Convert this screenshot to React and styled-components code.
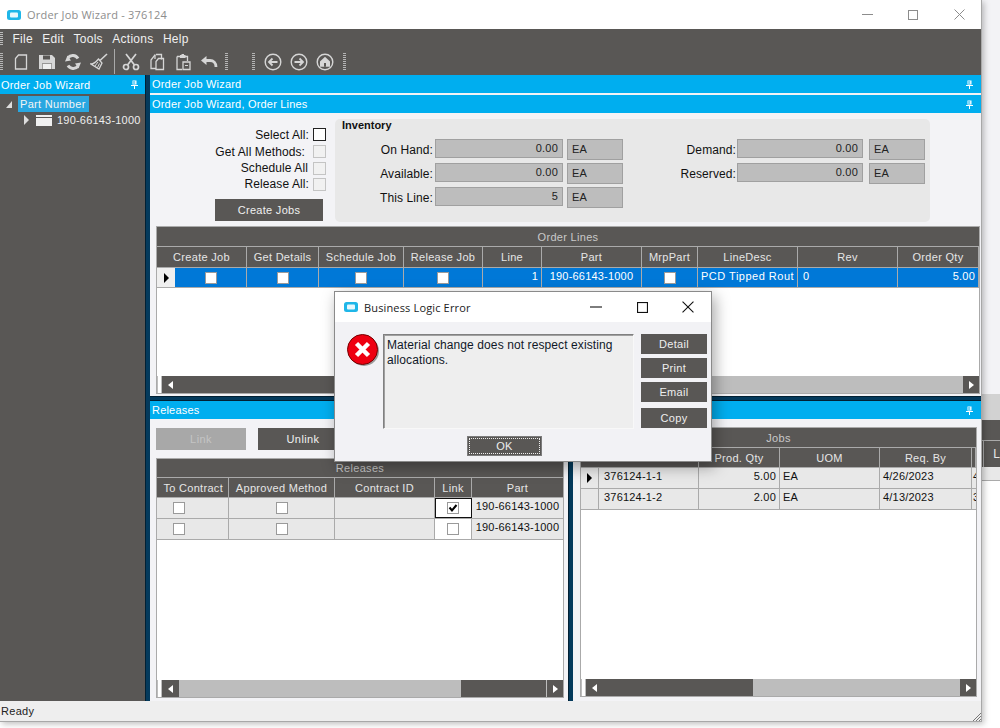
import React from "react";
import styled, { createGlobalStyle } from "styled-components";

const DARK = "#595755";
const CYAN = "#00aeef";
const LINE = "#aaaaaa";
const ICON = "#d6d6d6";

const GlobalStyle = createGlobalStyle`
  html, body {
    margin: 0;
    padding: 0;
    background: #fff;
  }
  * {
    box-sizing: border-box;
  }
`;

const Desktop = styled.div`
  position: relative;
  width: 1000px;
  height: 728px;
  overflow: hidden;
  background: #fff;
  font-family: "Liberation Sans", Arial, sans-serif;
  font-size: 11px;
  letter-spacing: 0.2px;
  color: #111;
`;

/* the other window, peeking out on the right */
const BackWindow = styled.div`
  position: absolute;
  left: 982px;
  top: 0;
  width: 18px;
  height: 728px;
  display: flex;
  flex-direction: column;
`;

const BackTop = styled.div`
  height: 394px;
  background: #f3f3f6;
`;

const BackBand = styled.div`
  height: 26px;
  background: #d2d2d2;
`;

const BackGroup = styled.div`
  height: 20px;
  background: ${DARK};
`;

const BackHeader = styled.div`
  height: 27px;
  background: ${DARK};
  border-top: 1px solid ${LINE};
  color: #e8e8e8;
  padding: 6px 0 0 4px;
  font-size: 12px;
  display: flex;
`;

const BackCut = styled.div`
  width: 4px;
  margin-left: -4px;
  border-right: 1px solid ${LINE};
  margin-top: -6px;
`;

const BackLetter = styled.span`
  margin-left: 9px;
`;

const BackRow = styled.div`
  height: 14px;
  background: #e8e8e8;
  border-bottom: 1px solid ${LINE};
  display: flex;
`;

const MainWindow = styled.div`
  position: absolute;
  left: 0;
  top: 0;
  width: 982px;
  height: 722px;
  display: flex;
  flex-direction: column;
  background: #fff;
  border-right: 1px solid #a8a8a8;
  border-bottom: 1px solid #a8a8a8;
  box-shadow: 2px 2px 6px rgba(0, 0, 0, 0.25);
`;

const TitleBar = styled.div`
  height: 29px;
  flex: none;
  display: flex;
  align-items: center;
  padding-left: 7px;
  background: #fff;
  font-family: "Open Sans", "Liberation Sans", sans-serif;
  font-size: 11px;
  letter-spacing: 0.2px;
  color: #8d8d8d;
`;

const TitleText = styled.span`
  margin-left: 6px;
`;

const WindowButtons = styled.div`
  margin-left: auto;
  margin-right: ${(p) => p.$shift || 0}px;
  display: flex;
  align-items: center;
`;

const WindowButton = styled.div`
  width: 46px;
  height: 29px;
  display: flex;
  align-items: center;
  justify-content: center;
`;

const MenuBar = styled.div`
  height: 19px;
  flex: none;
  display: flex;
  align-items: center;
  gap: 9.5px;
  background: ${DARK};
  color: #f0f0f0;
  font-size: 12px;
  letter-spacing: 0.25px;
`;

const MenuGrip = styled.div`
  width: 3px;
  height: 13px;
  background: repeating-linear-gradient(to bottom, #bbb 0 1px, transparent 1px 2px);
`;

const ToolBar = styled.div`
  height: 27px;
  flex: none;
  display: flex;
  align-items: center;
  background: ${DARK};
`;

const ToolGrip = styled.div`
  width: 3px;
  height: 18px;
  flex: none;
  margin-left: ${(p) => p.$left || 0}px;
  margin-right: ${(p) => p.$right || 0}px;
  background: repeating-linear-gradient(to bottom, #b5b5b5 0 1px, transparent 1px 2px);
`;

const ToolSep = styled.div`
  width: 1px;
  height: 25px;
  flex: none;
  margin: 0 3px 0 2px;
  background: #a9a9a9;
`;

const ToolIcon = styled.div`
  width: 26px;
  height: 20px;
  flex: none;
  display: flex;
  align-items: center;
  justify-content: center;
`;

const Workspace = styled.div`
  flex: 1;
  min-height: 0;
  display: flex;
`;

const LeftPanel = styled.div`
  width: 145px;
  flex: none;
  background: ${DARK};
  display: flex;
  flex-direction: column;
`;

const Caption = styled.div`
  height: ${(p) => p.$h || 18}px;
  flex: none;
  display: flex;
  align-items: center;
  justify-content: space-between;
  padding: 0 ${(p) => p.$pinRight || 8}px 0 ${(p) => p.$textLeft || 2}px;
  margin-bottom: ${(p) => p.$gap || 0}px;
  background: ${CYAN};
  color: #fff;
  white-space: nowrap;
`;

const Tree = styled.div`
  padding-top: 2px;
  color: #eee;
`;

const TreeRow = styled.div`
  height: ${(p) => p.$h}px;
  display: flex;
  align-items: center;
  padding-left: ${(p) => p.$indent}px;
`;

const TreeSelected = styled.span`
  height: 16px;
  padding: 0 3px 0 2px;
  margin-left: 6px;
  line-height: 16px;
  background: #29a7e1;
  color: #f4f4f4;
  letter-spacing: 0.3px;
`;

const TreeLabel = styled.span`
  margin-left: 5px;
`;

const FolderIcon = styled.div`
  width: 16px;
  height: 11px;
  margin-left: 7px;
  background: #f0f0f0;
  border-top: 2px solid #f0f0f0;
  box-shadow: inset 0 1px 0 ${DARK};
`;

const Splitter = styled.div`
  width: 5px;
  flex: none;
  background: #043a5c;
  border-left: 1px solid #012033;
`;

const RightPanel = styled.div`
  flex: 1;
  min-width: 0;
  display: flex;
  flex-direction: column;
  background: #f2f2f5;
`;

const WizardPane = styled.div`
  height: 281px;
  flex: none;
  padding: 6px 1px 0 6px;
  background: #f3f3f6;
`;

const WizardTop = styled.div`
  display: flex;
  height: 107px;
`;

const CheckColumn = styled.div`
  width: 170px;
  flex: none;
  display: flex;
  flex-direction: column;
  align-items: flex-end;
  padding-top: 7px;
`;

const CheckRow = styled.div`
  height: ${(p) => p.$h}px;
  display: flex;
  align-items: center;
  justify-content: flex-end;
  gap: ${(p) => p.$gap}px;
  font-size: 12px;
  letter-spacing: 0.1px;
`;

const Check = styled.span`
  width: ${(p) => p.$size || 12}px;
  height: ${(p) => p.$size || 12}px;
  flex: none;
  display: inline-flex;
  align-items: center;
  justify-content: center;
  background: ${(p) => (p.$off ? "#f1f1f1" : "#fff")};
  border: 1px solid ${(p) => (p.$off ? "#c4c4c4" : p.$strong ? "#222" : "#9a9a9a")};
`;

const CreateJobsButton = styled.div`
  width: 108px;
  height: 22px;
  margin: 7px 3px 0 0;
  display: flex;
  align-items: center;
  justify-content: center;
  background: ${DARK};
  color: #f0f0f0;
  letter-spacing: 0.3px;
`;

const InventoryBox = styled.div`
  width: 595px;
  height: 103px;
  flex: none;
  margin-left: 9px;
  padding: 1px 0 0 7px;
  border-radius: 5px;
  background: #e8e8e8;
`;

const InventoryTitle = styled.div`
  height: 17px;
  font-weight: bold;
  line-height: 11px;
  letter-spacing: 0;
`;

const InventoryColumns = styled.div`
  display: flex;
  margin-left: -7px;
  margin-top: 2px;
`;

const InventoryColumn = styled.div`
  display: flex;
  flex-direction: column;
  gap: 4px;
`;

const InvRow = styled.div`
  height: 20px;
  display: flex;
  gap: ${(p) => p.$gap}px;
`;

const InvLabel = styled.div`
  width: ${(p) => p.$w}px;
  height: 20px;
  line-height: 22px;
  text-align: right;
  font-size: 12px;
  letter-spacing: 0.1px;
  white-space: nowrap;
`;

const InvField = styled.div`
  width: ${(p) => p.$w}px;
  height: ${(p) => p.$h}px;
  line-height: ${(p) => p.$h - 2}px;
  padding: 0 ${(p) => (p.$right ? 4 : 0)}px 0 ${(p) => (p.$right ? 0 : 4)}px;
  margin-left: ${(p) => p.$ml || 0}px;
  text-align: ${(p) => (p.$right ? "right" : "left")};
  background: #bdbdbd;
  border: 1px solid #a0a0a0;
  color: #222;
`;

const GridBox = styled.div`
  display: flex;
  flex-direction: column;
  height: ${(p) => (p.$h ? `${p.$h}px` : "auto")};
  flex: ${(p) => (p.$h ? "none" : 1)};
  min-height: 0;
  background: #fff;
  border: 1px solid ${LINE};
  overflow: hidden;
`;

const GroupHeader = styled.div`
  height: ${(p) => p.$h}px;
  flex: none;
  display: flex;
  align-items: center;
  justify-content: center;
  background: ${DARK};
  border-bottom: 1px solid ${LINE};
  color: #c9c9c9;
  letter-spacing: 0.3px;
`;

const GridRow = styled.div`
  display: grid;
  flex: none;
  height: ${(p) => p.$h}px;
  grid-template-columns: ${(p) => p.$cols};
  border-bottom: 1px solid ${LINE};
  background: ${(p) => p.$bg || "#e8e8e8"};
  color: ${(p) => p.$color || "#111"};
`;

const HeadCell = styled.div`
  display: flex;
  align-items: center;
  justify-content: ${(p) => p.$align || "center"};
  padding-right: ${(p) => (p.$align ? 5 : 0)}px;
  overflow: hidden;
  white-space: nowrap;
  border-right: 1px solid ${LINE};
  background: ${DARK};
  color: #e6e6e6;
  letter-spacing: 0.3px;
`;

const Cell = styled.div`
  display: flex;
  align-items: center;
  justify-content: ${(p) =>
    p.$center ? "center" : p.$right ? "flex-end" : "flex-start"};
  padding: 0 3px 4px 3px;
  overflow: hidden;
  white-space: nowrap;
  border-right: 1px solid ${LINE};
  background: ${(p) => p.$bg || "transparent"};
  letter-spacing: ${(p) => p.$track || 0.2}px;
`;

const CheckCell = styled.div`
  display: flex;
  align-items: center;
  justify-content: center;
  padding-right: ${(p) => p.$pr || 0}px;
  border-right: 1px solid ${LINE};
  background: ${(p) => p.$bg || "transparent"};
  outline: ${(p) => (p.$focus ? "1px solid #111" : "none")};
  outline-offset: -1px;
`;

const Selector = styled.div`
  width: 18px;
  flex: none;
  display: flex;
  align-items: center;
  justify-content: center;
  background: ${(p) => p.$bg || "transparent"};
  border-right: ${(p) => (p.$line ? `1px solid ${LINE}` : "none")};
`;

const SelectorSplit = styled.div`
  display: flex;
  border-right: 1px solid ${LINE};
  min-width: 0;
`;

const SelectorBody = styled.div`
  flex: 1;
  display: flex;
  align-items: ${(p) => (p.$text ? "flex-start" : "center")};
  justify-content: ${(p) => (p.$text ? "flex-start" : "center")};
  padding-left: ${(p) => (p.$text ? 5 : 1)}px;
  padding-top: ${(p) => (p.$text ? 2 : 0)}px;
`;

const Triangle = styled.span`
  width: 0;
  height: 0;
  border-left: 5px solid ${(p) => p.$color || "#000"};
  border-top: 5px solid transparent;
  border-bottom: 5px solid transparent;
`;

const SmallArrow = styled.span`
  width: 0;
  height: 0;
  ${(p) => (p.$left ? "border-right" : "border-left")}: 5px solid #fff;
  border-top: 4px solid transparent;
  border-bottom: 4px solid transparent;
`;

const GridBlank = styled.div`
  flex: 1;
  min-height: 0;
  background: #fff;
`;

const ScrollBar = styled.div`
  height: 17px;
  flex: none;
  display: flex;
  background: #bdbdbd;
`;

const ScrollEdge = styled.div`
  width: 5px;
  flex: none;
  background: #fff;
  border-left: 1px solid #bdbdbd;
  border-right: 1px solid #bdbdbd;
`;

const ScrollTrack = styled.div`
  flex: 1;
  min-width: 0;
  display: flex;
`;

const ScrollThumb = styled.div`
  width: ${(p) => p.$w}px;
  margin-left: ${(p) => p.$start}px;
  display: flex;
  align-items: center;
  padding-left: ${(p) => (p.$start === 0 ? 6 : 0)}px;
  background: ${DARK};
`;

const ScrollButton = styled.div`
  width: 17px;
  flex: none;
  display: flex;
  align-items: center;
  justify-content: center;
  background: ${DARK};
  border-left: ${(p) => (p.$first ? "none" : "1px solid #bdbdbd")};
`;

const NavyBar = styled.div`
  height: 7px;
  flex: none;
  background: linear-gradient(to bottom, #f3f3f6 0 2px, #012033 2px 3px, #043a5c 3px 6px, #012033 6px 7px);
`;

const BottomPanes = styled.div`
  flex: 1;
  min-height: 0;
  display: flex;
`;

const ReleasesPane = styled.div`
  width: 418px;
  flex: none;
  display: flex;
  flex-direction: column;
`;

const JobsPane = styled.div`
  flex: 1;
  min-width: 0;
  display: flex;
  flex-direction: column;
`;

const PaneBody = styled.div`
  flex: 1;
  min-height: 0;
  display: flex;
  flex-direction: column;
  padding: ${(p) => p.$pad};
  background: #f3f3f6;
`;

const PaneButtons = styled.div`
  display: flex;
  gap: 12px;
  height: 22px;
  flex: none;
  margin-bottom: 8px;
`;

const PaneButton = styled.div`
  width: 90px;
  height: 22px;
  display: flex;
  align-items: center;
  justify-content: center;
  background: ${(p) => (p.$disabled ? "#a8a8a8" : DARK)};
  color: ${(p) => (p.$disabled ? "#c4c4c4" : "#f0f0f0")};
  letter-spacing: 0.4px;
`;

const StatusBar = styled.div`
  position: relative;
  height: 20px;
  flex: none;
  display: flex;
  align-items: center;
  padding-left: 1px;
  background: #eeeeee;
  color: #222;
  letter-spacing: 0.3px;
`;

const ResizeGrip = styled.svg`
  position: absolute;
  right: 0;
  bottom: 0;
`;

const Dialog = styled.div`
  position: absolute;
  left: 334px;
  top: 291px;
  width: 378px;
  height: 171px;
  display: flex;
  flex-direction: column;
  background: #f2f2f5;
  border: 1px solid #8a8a8a;
  box-shadow: 3px 5px 14px rgba(0, 0, 0, 0.35);
`;

const DialogTitle = styled.div`
  height: 30px;
  flex: none;
  display: flex;
  align-items: center;
  padding-left: 9px;
  background: #fff;
  font-family: "Open Sans", "Liberation Sans", sans-serif;
  font-size: 11px;
  letter-spacing: 0.15px;
  color: #222;
`;

const DialogTitleText = styled.span`
  margin-left: 6px;
`;

const DialogBody = styled.div`
  flex: 1;
  display: flex;
  padding: 12px 4px 0 12px;
`;

const ErrorIcon = styled.div`
  width: 36px;
  flex: none;
`;

const MessageBox = styled.div`
  width: 251px;
  height: 95px;
  flex: none;
  padding: 3px 3px;
  font-size: 12px;
  line-height: 15px;
  letter-spacing: 0.1px;
  background: #eeeeee;
  border: 1px solid;
  border-color: #808080 #f8f8f8 #f8f8f8 #808080;
  box-shadow: inset 1px 1px 0 #a0a0a0;
  color: #101828;
`;

const DialogButtons = styled.div`
  margin-left: 7px;
  width: 66px;
  display: flex;
  flex-direction: column;
`;

const DialogButton = styled.div`
  height: 20px;
  margin-bottom: ${(p) => p.$gap}px;
  display: flex;
  align-items: center;
  justify-content: center;
  background: ${DARK};
  color: #eee;
  letter-spacing: 0.3px;
`;

const DialogFooter = styled.div`
  height: 33px;
  flex: none;
  padding: 7px 0 0 132px;
`;

const OkButton = styled.div`
  width: 75px;
  height: 20px;
  display: flex;
  align-items: center;
  justify-content: center;
  background: ${DARK};
  border: 1px solid #7c7c7c;
  outline: 1px dotted #eee;
  outline-offset: -3px;
  color: #eee;
`;

const AppIcon = () => (
  <svg width="14" height="10" viewBox="0 0 14 10">
    <rect width="14" height="10" rx="2.5" fill="#1fb6e8" />
    <rect x="3" y="2.5" width="8" height="5" rx="1" fill="#e8f8fd" />
  </svg>
);

const Pin = () => (
  <svg width="7" height="9" viewBox="0 0 7 9">
    <path d="M1.5 0.5h4v4h-4zM0 5h7v1H0zM3 6h1v3H3z" fill="#fff" />
    <path d="M3.6 1h1v3h-1z" fill="#cfeffc" />
    <path d="M2.5 1h1v3h-1z" fill={CYAN} />
  </svg>
);

const Tool = ({ children }) => (
  <ToolIcon>
    <svg width="18" height="18" viewBox="0 0 18 18" fill="none" stroke={ICON} strokeWidth="1.3">
      {children}
    </svg>
  </ToolIcon>
);

const Toolbar = () => (
  <ToolBar>
    <ToolGrip $right={5} />
    <Tool>
      <path d="M6.5 2h8v14H3.5V5.5z" />
    </Tool>
    <Tool>
      <path d="M1 2h13l3 3v11H1z" fill={ICON} stroke="none" />
      <path d="M5 2.5h7v4H5zM4 10.5h10V16H4z" fill={DARK} stroke="none" />
      <path d="M4.5 11h9v5h-9z" fill="#efefef" stroke="none" />
    </Tool>
    <Tool>
      <path d="M14 5.5A6.2 6.2 0 0 0 4 4.7M4 12.5a6.2 6.2 0 0 0 10 0.8" strokeWidth="3" />
      <path d="M1 8.5l2.5-6 3.5 5zM17 9.5l-2.5 6-3.5-5z" fill={ICON} stroke="none" />
    </Tool>
    <Tool>
      <path d="M17 1L10 7.5" strokeWidth="1.6" />
      <path d="M8.5 6L12 10 9 16 1 11c2.5 0 5-2 7.5-5z" />
      <path d="M5 13l3-4M7.5 14.5l2-4" strokeWidth="1" />
    </Tool>
    <ToolSep />
    <Tool>
      <path d="M4 1l8.5 11M14 1L5.5 12" strokeWidth="1.7" />
      <circle cx="4" cy="14" r="2.5" strokeWidth="1.7" />
      <circle cx="14" cy="14" r="2.5" strokeWidth="1.7" />
    </Tool>
    <Tool>
      <path d="M8 1.5h5.5v5M7 6V1.5" />
      <path d="M7 1.8L3 7v8.5h5" />
      <path d="M10.5 5.5h5v11h-7.5V8.5z" />
    </Tool>
    <Tool>
      <path d="M3 3.5h10.5V8M3 3.5V16.5h5" />
      <path d="M6 2h1.5V1h2.5v1h1.5v3H6z" fill={ICON} stroke="none" />
      <path d="M9 9h7v7.5H9z" />
      <path d="M11 12h3v1h-3z" fill={ICON} stroke="none" />
    </Tool>
    <Tool>
      <path d="M16 14c0-4-2.5-6.5-6-6.5H5" strokeWidth="2.8" />
      <path d="M1 7.5L6.5 3v9z" fill={ICON} stroke="none" />
    </Tool>
    <ToolGrip $left={3} />
    <ToolGrip $left={24} $right={5} />
    <ToolIcon>
      <svg width="18" height="18" viewBox="0 0 18 18" fill="none" stroke={ICON} strokeWidth="1.4">
        <circle cx="9" cy="9" r="7.8" />
        <path d="M13.5 9H5.5M8.5 5.5L5 9l3.5 3.5" strokeWidth="1.8" />
      </svg>
    </ToolIcon>
    <ToolIcon>
      <svg width="18" height="18" viewBox="0 0 18 18" fill="none" stroke={ICON} strokeWidth="1.4">
        <circle cx="9" cy="9" r="7.8" />
        <path d="M4.5 9h8M9.5 5.5L13 9l-3.5 3.5" strokeWidth="1.8" />
      </svg>
    </ToolIcon>
    <ToolIcon>
      <svg width="18" height="18" viewBox="0 0 18 18" fill="none" stroke={ICON} strokeWidth="1.4">
        <circle cx="9" cy="9" r="7.8" />
        <path d="M9 3.8L14 8.5v5.2H4V8.5z" fill={ICON} stroke="none" />
        <path d="M8 10h2v3.7H8z" fill={DARK} stroke="none" />
      </svg>
    </ToolIcon>
    <ToolGrip $left={5} />
  </ToolBar>
);

const WindowControls = ({ color, size = 10, shift }) => (
  <WindowButtons $shift={shift}>
    <WindowButton>
      <svg width={size + 1} height={size + 1} viewBox="0 0 11 11">
        <path d="M0 5.5h11" stroke={color} />
      </svg>
    </WindowButton>
    <WindowButton>
      <svg width={size} height={size} viewBox="0 0 10 10">
        <rect x="0.5" y="0.5" width="9" height="9" fill="none" stroke={color} />
      </svg>
    </WindowButton>
    <WindowButton>
      <svg width={size + 1} height={size + 1} viewBox="0 0 11 11">
        <path d="M0.5 0.5l10 10M10.5 0.5l-10 10" fill="none" stroke={color} />
      </svg>
    </WindowButton>
  </WindowButtons>
);

const Scroller = ({ start, width }) => (
  <ScrollBar>
    <ScrollEdge />
    <ScrollTrack>
      <ScrollThumb $start={start} $w={width}>
        <SmallArrow $left />
      </ScrollThumb>
    </ScrollTrack>
    <ScrollButton>
      <SmallArrow />
    </ScrollButton>
  </ScrollBar>
);

const ORDER_COLS = "90px 72px 85px 79px 59px 100px 56px 100px 100px 81px 1fr";
const RELEASE_COLS = "72px 106px 100px 37px 92px";
const JOB_COLS = "118px 81px 100px 92px 1fr";

const ReleaseRow = ({ checked, focus }) => (
  <GridRow $cols={RELEASE_COLS} $h={21}>
    <CheckCell $pr={27}>
      <Check />
    </CheckCell>
    <CheckCell>
      <Check />
    </CheckCell>
    <Cell />
    <CheckCell $bg="#fff" $focus={focus}>
      <Check>
        {checked && (
          <svg width="10" height="10" viewBox="0 0 10 10">
            <path d="M1.5 4.5L4 7.5 8.5 2" fill="none" stroke="#000" strokeWidth="2" />
          </svg>
        )}
      </Check>
    </CheckCell>
    <Cell $center>190-66143-1000</Cell>
  </GridRow>
);

const JobRow = ({ job, qty, date, next, selected }) => (
  <GridRow $cols={JOB_COLS} $h={21}>
    <SelectorSplit>
      <Selector $line>{selected && <Triangle />}</Selector>
      <SelectorBody $text>{job}</SelectorBody>
    </SelectorSplit>
    <Cell $right>{qty}</Cell>
    <Cell>EA</Cell>
    <Cell>{date}</Cell>
    <Cell style={{ paddingLeft: 1 }}>{next}</Cell>
  </GridRow>
);

const Inv = ({ label, labelW, fieldW, value, gap, eaMl }) => (
  <InvRow $gap={gap}>
    <InvLabel $w={labelW}>{label}</InvLabel>
    <InvField $w={fieldW} $h={19} $right>
      {value}
    </InvField>
    <InvField $w={56} $h={21} $ml={eaMl}>
      EA
    </InvField>
  </InvRow>
);

export default function App() {
  return (
    <Desktop>
      <GlobalStyle />
      <BackWindow>
        <BackTop />
        <BackBand />
        <BackGroup />
        <BackHeader>
          <BackCut />
          <BackLetter>L</BackLetter>
        </BackHeader>
        <BackRow />
      </BackWindow>

      <MainWindow>
        <TitleBar>
          <AppIcon />
          <TitleText>Order Job Wizard - 376124</TitleText>
          <WindowControls color="#8c8c8c" shift={-1} />
        </TitleBar>
        <MenuBar>
          <MenuGrip />
          <span>File</span>
          <span>Edit</span>
          <span>Tools</span>
          <span>Actions</span>
          <span>Help</span>
        </MenuBar>
        <Toolbar />

        <Workspace>
          <LeftPanel>
            <Caption $h={19} $pinRight={7} $textLeft={1}>
              Order Job Wizard
              <Pin />
            </Caption>
            <Tree>
              <TreeRow $h={16} $indent={6}>
                <svg width="6" height="7" viewBox="0 0 6 7">
                  <path d="M6 0v7H0z" fill="#ddd" />
                </svg>
                <TreeSelected>Part Number</TreeSelected>
              </TreeRow>
              <TreeRow $h={16} $indent={24}>
                <Triangle $color="#ddd" />
                <FolderIcon />
                <TreeLabel>190-66143-1000</TreeLabel>
              </TreeRow>
            </Tree>
          </LeftPanel>
          <Splitter />
          <RightPanel>
            <Caption $gap={2}>
              Order Job Wizard
              <Pin />
            </Caption>
            <Caption>
              Order Job Wizard, Order Lines
              <Pin />
            </Caption>
            <WizardPane>
              <WizardTop>
                <CheckColumn>
                  <CheckRow $h={17} $gap={4}>
                    Select All:
                    <Check $strong $size={13} />
                  </CheckRow>
                  <CheckRow $h={17} $gap={8}>
                    Get All Methods:
                    <Check $off $size={13} />
                  </CheckRow>
                  <CheckRow $h={16} $gap={5}>
                    Schedule All
                    <Check $off $size={13} />
                  </CheckRow>
                  <CheckRow $h={16} $gap={4}>
                    Release All:
                    <Check $off $size={13} />
                  </CheckRow>
                  <CreateJobsButton>Create Jobs</CreateJobsButton>
                </CheckColumn>
                <InventoryBox>
                  <InventoryTitle>Inventory</InventoryTitle>
                  <InventoryColumns>
                    <InventoryColumn>
                      <Inv label="On Hand:" labelW={98} fieldW={128} value="0.00" gap={2} eaMl={2} />
                      <Inv label="Available:" labelW={98} fieldW={128} value="0.00" gap={2} eaMl={2} />
                      <Inv label="This Line:" labelW={98} fieldW={128} value="5" gap={2} eaMl={2} />
                    </InventoryColumn>
                    <InventoryColumn>
                      <Inv label="Demand:" labelW={113} fieldW={126} value="0.00" gap={1} eaMl={5} />
                      <Inv label="Reserved:" labelW={113} fieldW={126} value="0.00" gap={1} eaMl={5} />
                    </InventoryColumn>
                  </InventoryColumns>
                </InventoryBox>
              </WizardTop>
              <GridBox $h={168}>
                <GroupHeader $h={20}>Order Lines</GroupHeader>
                <GridRow $cols={ORDER_COLS} $h={21} $bg={DARK}>
                  <HeadCell>Create Job</HeadCell>
                  <HeadCell>Get Details</HeadCell>
                  <HeadCell>Schedule Job</HeadCell>
                  <HeadCell>Release Job</HeadCell>
                  <HeadCell>Line</HeadCell>
                  <HeadCell>Part</HeadCell>
                  <HeadCell>MrpPart</HeadCell>
                  <HeadCell>LineDesc</HeadCell>
                  <HeadCell>Rev</HeadCell>
                  <HeadCell>Order Qty</HeadCell>
                  <HeadCell />
                </GridRow>
                <GridRow $cols={ORDER_COLS} $h={20} $bg="#0078d7" $color="#fff">
                  <SelectorSplit>
                    <Selector $bg="#efefef">
                      <Triangle />
                    </Selector>
                    <SelectorBody>
                      <Check />
                    </SelectorBody>
                  </SelectorSplit>
                  <CheckCell>
                    <Check />
                  </CheckCell>
                  <CheckCell>
                    <Check />
                  </CheckCell>
                  <CheckCell>
                    <Check />
                  </CheckCell>
                  <Cell $right>1</Cell>
                  <Cell $center>190-66143-1000</Cell>
                  <CheckCell>
                    <Check />
                  </CheckCell>
                  <Cell $track={0.5}>PCD Tipped Rout</Cell>
                  <Cell style={{ paddingLeft: 5 }}>0</Cell>
                  <Cell $right>5.00</Cell>
                  <Cell style={{ padding: 0 }} />
                </GridRow>
                <GridBlank />
                <Scroller start={0} width={440} />
              </GridBox>
            </WizardPane>
            <NavyBar />
            <BottomPanes>
              <ReleasesPane>
                <Caption>
                  Releases
                  <Pin />
                </Caption>
                <PaneBody $pad="9px 4px 3px 6px">
                  <PaneButtons>
                    <PaneButton $disabled>Link</PaneButton>
                    <PaneButton>Unlink</PaneButton>
                  </PaneButtons>
                  <GridBox>
                    <GroupHeader $h={19}>Releases</GroupHeader>
                    <GridRow $cols={RELEASE_COLS} $h={20} $bg={DARK}>
                      <HeadCell $align="flex-end">To Contract</HeadCell>
                      <HeadCell>Approved Method</HeadCell>
                      <HeadCell>Contract ID</HeadCell>
                      <HeadCell>Link</HeadCell>
                      <HeadCell>Part</HeadCell>
                    </GridRow>
                    <ReleaseRow checked focus />
                    <ReleaseRow />
                    <GridBlank />
                    <ScrollBar>
                      <ScrollEdge />
                      <ScrollButton $first>
                        <SmallArrow $left />
                      </ScrollButton>
                      <ScrollTrack>
                        <ScrollThumb $start={282} $w={85} />
                      </ScrollTrack>
                      <ScrollButton>
                        <SmallArrow />
                      </ScrollButton>
                    </ScrollBar>
                  </GridBox>
                </PaneBody>
              </ReleasesPane>
              <Splitter />
              <JobsPane>
                <Caption>
                  <span />
                  <Pin />
                </Caption>
                <PaneBody $pad="8px 4px 4px 7px">
                  <GridBox>
                    <GroupHeader $h={20}>Jobs</GroupHeader>
                    <GridRow $cols={JOB_COLS} $h={20} $bg={DARK}>
                      <HeadCell>Job</HeadCell>
                      <HeadCell>Prod. Qty</HeadCell>
                      <HeadCell>UOM</HeadCell>
                      <HeadCell>Req. By</HeadCell>
                      <HeadCell />
                    </GridRow>
                    <JobRow selected job="376124-1-1" qty="5.00" date="4/26/2023" next="4" />
                    <JobRow job="376124-1-2" qty="2.00" date="4/13/2023" next="3" />
                    <GridBlank />
                    <Scroller start={0} width={167} />
                  </GridBox>
                </PaneBody>
              </JobsPane>
            </BottomPanes>
          </RightPanel>
        </Workspace>

        <StatusBar>
          Ready
          <ResizeGrip width="8" height="8" viewBox="0 0 8 8">
            <path d="M0 8L8 0M3 8l5-5M6 8l2-2" stroke="#777" strokeWidth="1" />
          </ResizeGrip>
        </StatusBar>
      </MainWindow>

      <Dialog>
        <DialogTitle>
          <AppIcon />
          <DialogTitleText>Business Logic Error</DialogTitleText>
          <WindowControls color="#111" size={11} />
        </DialogTitle>
        <DialogBody>
          <ErrorIcon>
            <svg width="33" height="33" viewBox="0 0 33 33">
              <circle cx="17" cy="17" r="15" fill="#9a9a9a" />
              <circle cx="15.5" cy="15.5" r="15" fill="#ee0011" stroke="#700" strokeWidth="1" />
              <path d="M9.5 9.5l12 12M21.5 9.5l-12 12" stroke="#fff" strokeWidth="4.5" />
            </svg>
          </ErrorIcon>
          <MessageBox>Material change does not respect existing allocations.</MessageBox>
          <DialogButtons>
            <DialogButton $gap={4}>Detail</DialogButton>
            <DialogButton $gap={4}>Print</DialogButton>
            <DialogButton $gap={6}>Email</DialogButton>
            <DialogButton $gap={0}>Copy</DialogButton>
          </DialogButtons>
        </DialogBody>
        <DialogFooter>
          <OkButton>OK</OkButton>
        </DialogFooter>
      </Dialog>
    </Desktop>
  );
}
